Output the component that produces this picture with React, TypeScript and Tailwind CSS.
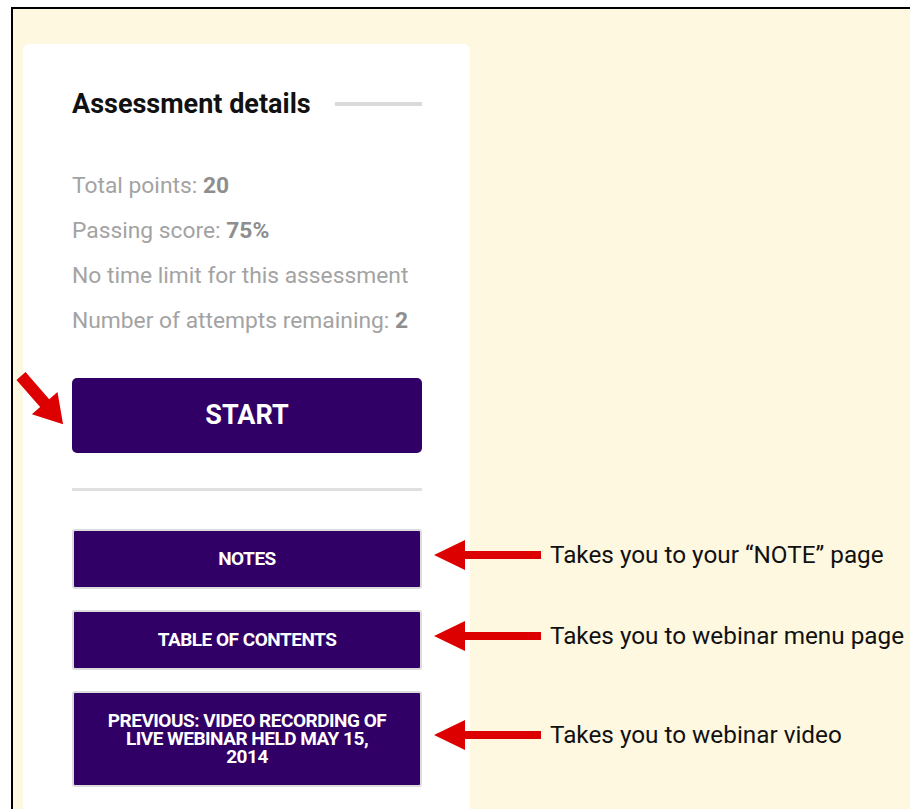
import type { ReactNode } from "react";

const font = { fontFamily: "Roboto, 'Liberation Sans', sans-serif" };

const LeftArrow = () => (
  <svg width="107" height="30" viewBox="0 0 107 30" className="shrink-0">
    <polygon points="0,15 31,0 31,11 107,11 107,19 31,19 31,30" fill="#dd0000" />
  </svg>
);

// thick diagonal pointer aimed at the start button
const StartArrow = () => (
  <svg
    width="52"
    height="58"
    viewBox="0 0 52 58"
    className="absolute left-[-56px] top-[-8px]"
  >
    <g transform="translate(5 6) rotate(48.9)">
      <polygon points="0,-6 36,-6 36,-17 64,0 36,17 36,6 0,6" fill="#dd0000" />
    </g>
  </svg>
);

const Annotation = ({ children }: { children: ReactNode }) => (
  <div className="absolute left-[calc(100%+12px)] top-[calc(50%-4px)] -translate-y-1/2 flex items-center">
    <LeftArrow />
    <span className="ml-[9px] whitespace-nowrap text-[24.3px] leading-[28px] text-[#111]">
      {children}
    </span>
  </div>
);

const NavButton = ({
  label,
  note,
  tall,
}: {
  label: ReactNode;
  note: string;
  tall?: boolean;
}) => (
  <div className="relative">
    <button
      className={`${
        tall ? "h-[96px]" : "h-[60px]"
      } w-full rounded-[3px] border-2 border-[#dcdcdc] bg-[#300066] px-[30px] text-[19px] font-bold uppercase leading-[18px] tracking-[-0.5px] text-white`}
    >
      {label}
    </button>
    <Annotation>{note}</Annotation>
  </div>
);

const Stat = ({ label, value }: { label: string; value?: string }) => (
  <p className="text-[22.8px] leading-[45px] text-[#a3a3a3]">
    {label}
    {value && <b className="font-bold text-[#8e8e8e]">{value}</b>}
  </p>
);

export default function App() {
  return (
    <div className="w-[911px] h-[809px] overflow-hidden bg-white pl-[11px] pt-[7px] pr-[1px]" style={font}>
      <div className="flex h-[830px] border-l-2 border-t-2 border-black bg-[#fff8e1]">
        <div className="ml-[10px] mt-[35px] w-[447px] rounded-t-md bg-white pl-[49px] pr-[48px] pt-[44px]">
          <div className="flex items-center gap-6">
            <h2 className="text-[27px] font-bold leading-[32px] text-[#111]">
              Assessment details
            </h2>
            <div className="h-[4px] flex-1 bg-[#dadada]" />
          </div>

          <div className="mt-[43px]">
            <Stat label="Total points: " value="20" />
            <Stat label="Passing score: " value="75%" />
            <Stat label="No time limit for this assessment" />
            <Stat label="Number of attempts remaining: " value="2" />
          </div>

          <div className="relative mt-[35px]">
            <StartArrow />
            <button className="h-[75px] w-full rounded-[5px] bg-[#300066] text-[27px] font-bold text-white">
              START
            </button>
          </div>

          <div className="mt-[35px] h-[3px] bg-[#e0e0e0]" />

          <div className="mt-[38px] flex flex-col gap-[21px]">
            <NavButton label="Notes" note="Takes you to your “NOTE” page" />
            <NavButton
              label="Table of contents"
              note="Takes you to webinar menu page"
            />
            <NavButton
              tall
              label="Previous: video recording of live webinar held May 15, 2014"
              note="Takes you to webinar video"
            />
          </div>
        </div>
      </div>
    </div>
  );
}
